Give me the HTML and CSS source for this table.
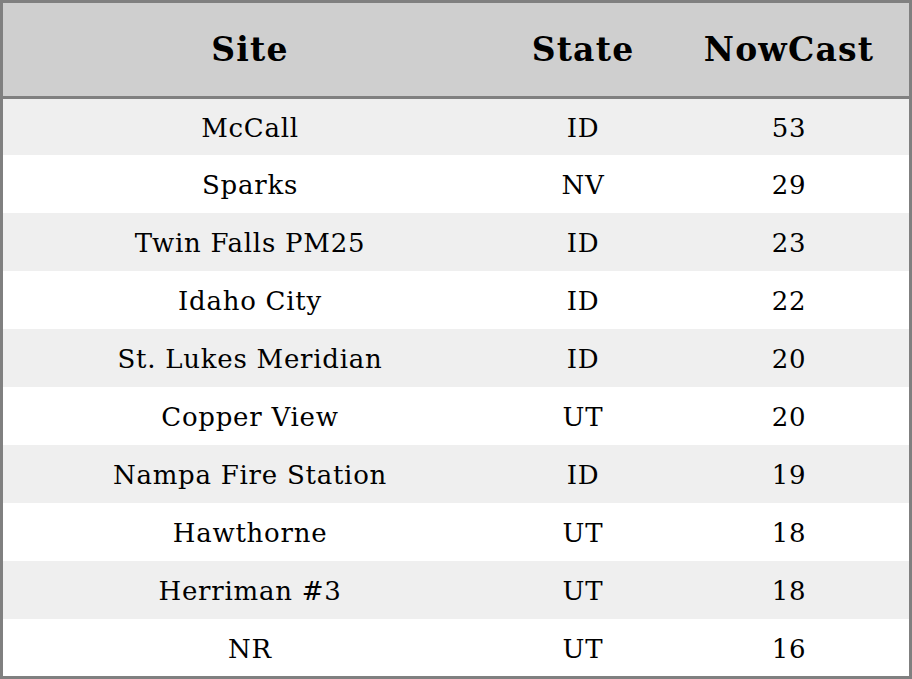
FILE: index.html
```
<!DOCTYPE html>
<html>
<head>
<meta charset="utf-8">
<link rel="stylesheet" href="styles.css">
</head>
<body>
<table class="aq">
<thead>
<tr><th class="c-site">Site</th><th class="c-state">State</th><th class="c-now">NowCast</th></tr>
</thead>
<tbody>
<tr><td>McCall</td><td>ID</td><td>53</td></tr>
<tr><td>Sparks</td><td>NV</td><td>29</td></tr>
<tr><td>Twin Falls PM25</td><td>ID</td><td>23</td></tr>
<tr><td>Idaho City</td><td>ID</td><td>22</td></tr>
<tr><td>St. Lukes Meridian</td><td>ID</td><td>20</td></tr>
<tr><td>Copper View</td><td>UT</td><td>20</td></tr>
<tr><td>Nampa Fire Station</td><td>ID</td><td>19</td></tr>
<tr><td>Hawthorne</td><td>UT</td><td>18</td></tr>
<tr><td>Herriman #3</td><td>UT</td><td>18</td></tr>
<tr><td>NR</td><td>UT</td><td>16</td></tr>
</tbody>
</table>
</body>
</html>
```
FILE: styles.css
```
html, body {
  margin: 0;
  padding: 0;
  background: #ffffff;
}
.aq {
  width: 912px;
  border-collapse: separate;
  border-spacing: 0;
  border: 3px solid #808080;
  font-family: "DejaVu Serif", serif;
  color: #000;
  table-layout: fixed;
}
.aq thead tr {
  height: 96px;
}
.aq th {
  background: #cfcfcf;
  font-size: 33px;
  letter-spacing: 1.2px;
  font-weight: bold;
  padding: 0 0 1px 0;
  text-align: center;
  border-bottom: 3px solid #808080;
}
.c-site { width: 494px; }
.c-state { width: 172px; }
.c-now { width: 240px; }
.aq tbody tr {
  height: 58px;
}
.aq tbody tr:first-child {
  height: 56px;
}
.aq tbody tr:last-child {
  height: 57px;
}
.aq td {
  font-size: 26px;
  letter-spacing: 0.75px;
  text-align: center;
  padding: 2px 0 0 0;
}
.aq tbody tr:nth-child(odd) td {
  background: #efefef;
}
```
